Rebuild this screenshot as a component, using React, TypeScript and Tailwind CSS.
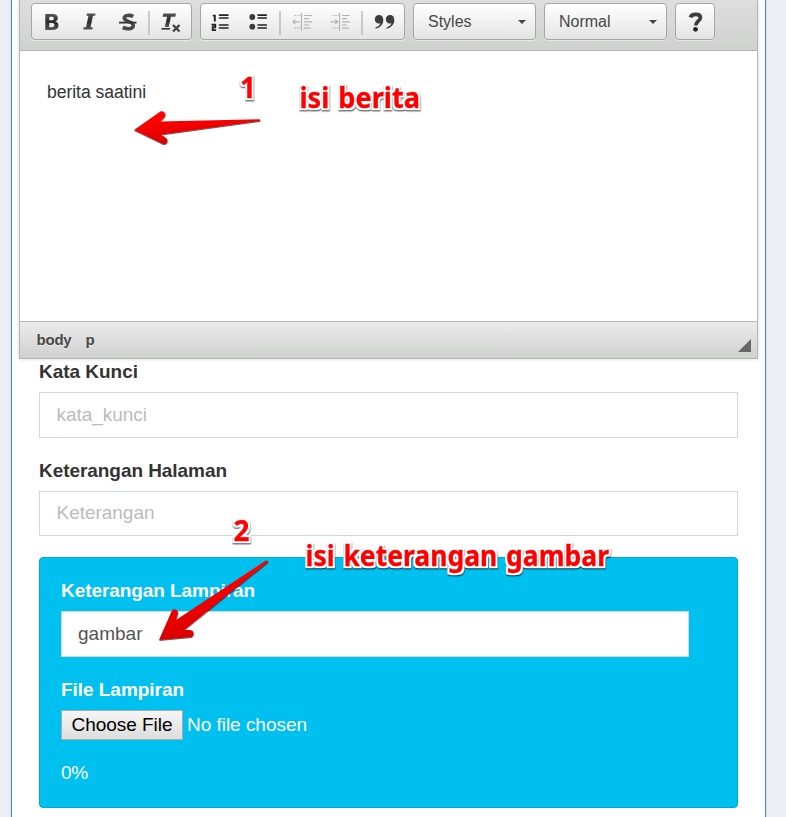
import React from "react";

const sans = "font-['Liberation_Sans',Arial,sans-serif]";
const group =
  "flex h-[37px] shrink-0 rounded-[4px] border border-[#a6a6a6] bg-gradient-to-b from-white to-[#e4e4e4] shadow-[0_1px_0_rgba(255,255,255,0.5)]";

function FormatIcons() {
  return (
    <svg className="block h-[35px] w-[159px]" viewBox="32 4 159 35">
      <defs>
        <linearGradient id="ink" x1="0" y1="0" x2="0" y2="1">
          <stop offset="0" stopColor="#555" />
          <stop offset=".5" stopColor="#2b2b2b" />
          <stop offset="1" stopColor="#555" />
        </linearGradient>
      </defs>
      <path
        fill="url(#ink)"
        fillRule="evenodd"
        d="M45.300 14h7c3.600 0 5.500 1.500 5.500 4 0 2-1 3.100-2.500 3.600 2 .4 3.200 1.900 3.200 4 0 3-2.200 4.400-6 4.400h-7.200zM49.300 16.800v3.500h2.200c1.600 0 2.300-.6 2.300-1.800s-.7-1.700-2.300-1.700zM49.300 23v4.200h2.500c1.800 0 2.600-.7 2.600-2.100s-.8-2.100-2.600-2.100z"
      />
      <path
        fill="url(#ink)"
        d="M87 13.500h8.500l-.4 2.300h-2.100l-2.500 11.500h2.200l-.5 2.300h-9l.5-2.300h2.300l2.500-11.500h-2z"
      />
      <path
        d="M133.300 16.400c-3.400-1.600-9-1.500-9 1.700 0 4.300 9 2.700 9 7.200 0 4-6 4.300-10.500 2.200"
        fill="none"
        stroke="#484848"
        strokeWidth="3.600"
      />
      <path d="M119 22.600h17.500" stroke="#333" strokeWidth="1.800" />
      <path d="M149 11v24" stroke="#bbb" strokeWidth="1.500" />
      <path
        fill="url(#ink)"
        d="M163.300 13.500h12.700l-.7 3.200h-4.300l-2.300 10.300h-3.900l2.300-10.300h-4.500z"
      />
      <path d="M161.500 28.800h8.500" stroke="#333" strokeWidth="1.600" />
      <path d="M173 25l6.500 6.500M179.500 25l-6.500 6.500" stroke="#444" strokeWidth="2.400" />
    </svg>
  );
}

function ParagraphIcons() {
  return (
    <svg className="block h-[35px] w-[203px]" viewBox="201 4 203 35">
      <g fill="none" stroke="#222">
        <path d="M212.800 15.600h2v5.900M211.600 24.700h3.600v2.500h-2.500v2.900h3.400" strokeWidth="1.900" />
        <path
          d="M219.500 15.100h8.500M219.500 18h8.500M219.500 25h8.500M219.500 28h8.500M258 15.100h8.300M258 18h8.300M258 25h8.300M258 28h8.300"
          strokeWidth="1.600"
          strokeLinecap="round"
        />
      </g>
      <circle cx="252.300" cy="17" r="2.900" fill="#3a3a3a" />
      <circle cx="252.300" cy="26.700" r="2.900" fill="#3a3a3a" />
      <path d="M280 11v24M362 11v24" stroke="#bbb" strokeWidth="1.500" />
      <g fill="none" stroke="#b4b4b4" strokeWidth="1.200">
        <path d="M301.500 13v18M304 15.500h8M304 18.700h5M304 21.800h8M304 25h5M304 28.200h7" />
        <path d="M294.500 15.500h6M294.500 27.800h6" strokeDasharray="1.500 1" />
        <path d="M293 21.800h7M295.300 19.500l-2.300 2.300 2.300 2.300" />
        <path d="M339.500 13v18M342 15.500h8M342 18.700h5M342 21.800h8M342 25h5M342 28.200h7" />
        <path d="M332.500 15.500h6M332.500 27.800h6" strokeDasharray="1.500 1" />
        <path d="M330.500 21.800h7M335.200 19.500l2.300 2.300-2.300 2.300" />
      </g>
      <g fill="#3d3d3d">
        <path d="M379 15c2.700 0 4.300 2 4.300 4.900 0 4.500-3.300 7.800-7.800 8.800v-1.200c2.700-.8 4.500-2.400 4.900-4.200-3.200.9-5.600-.9-5.600-4 0-2.500 1.700-4.300 4.200-4.300z" />
        <path d="M390 15c2.700 0 4.300 2 4.300 4.900 0 4.500-3.300 7.800-7.800 8.800v-1.200c2.700-.8 4.500-2.400 4.900-4.200-3.200.9-5.600-.9-5.600-4 0-2.500 1.700-4.300 4.200-4.300z" />
      </g>
    </svg>
  );
}

function Combo({ label }: { label: string }) {
  return (
    <div className={`${group} w-[123px] items-center justify-between pr-[9px] pl-[14px]`}>
      <span className="text-[16px] leading-[20px] text-[#474747]">{label}</span>
      <svg className="h-1 w-2" viewBox="0 0 8 4">
        <path d="M0 0h8L4 4z" fill="#444" />
      </svg>
    </div>
  );
}

function Editor() {
  return (
    <div className="ml-[7px] h-[359px] w-[739px] border-x border-b border-[#b6b6b6] bg-white shadow-[0_0_4px_rgba(0,0,0,0.15)]">
      <div className="flex h-[51px] gap-2 border-b border-[#b6b6b6] bg-gradient-to-b from-[#dedede] to-[#cfd1cf] pt-[3px] pl-[11px]">
        <div className={`${group} w-[161px]`}>
          <FormatIcons />
        </div>
        <div className={`${group} w-[205px]`}>
          <ParagraphIcons />
        </div>
        <Combo label="Styles" />
        <Combo label="Normal" />
        <div className={`${group} w-[40px]`}>
          <svg className="block h-[35px] w-[38px]" viewBox="676 4 38 35">
            <path
              d="M690.400 17.300c1.500-4 10-4 10 .3 0 3.600-4.600 3.300-4.600 7.900"
              fill="none"
              stroke="#3c3c3c"
              strokeWidth="3.700"
            />
            <circle cx="695.500" cy="29.300" r="2.400" fill="#222" />
          </svg>
        </div>
      </div>
      <div className="h-[270px] pt-[31px] pl-[27px] text-[17.600px] leading-[20px] text-[#333]">
        <Fit width={99} text="berita saatini" />
      </div>
      <div className="flex h-[37px] items-center border-t border-[#b6b6b6] bg-gradient-to-b from-[#ebebeb] to-[#cfd1cf] pr-[6px] pl-[16.500px] text-[15px] font-bold text-[#484848] [text-shadow:0_1px_0_rgba(255,255,255,0.5)]">
        <Fit width={35} text="body" />
        <span className="ml-[14px]">p</span>
        <svg className="mt-[11px] ml-auto h-[13px] w-[13px]" viewBox="0 0 13 13">
          <path d="M13 0v13H0z" fill="#666" />
        </svg>
      </div>
    </div>
  );
}

/** A single line of text justified to a set width. */
function Fit({ width, text }: { width: number; text: string }) {
  const ref = React.useRef<HTMLSpanElement>(null);
  const [spacing, setSpacing] = React.useState(0);
  React.useLayoutEffect(() => {
    if (ref.current) {
      const natural = ref.current.getBoundingClientRect().width;
      setSpacing((width - natural) / text.length);
    }
  }, [width, text]);
  return (
    <span ref={ref} className="inline-block whitespace-nowrap" style={{ letterSpacing: spacing }}>
      {text}
    </span>
  );
}

function Annotations() {
  const label =
    "fill-[#ff0000] stroke-[#ff0000] font-['Noto_Sans','Open_Sans',sans-serif] text-[28.500px] font-bold";
  return (
    <svg className="pointer-events-none absolute inset-0 h-[817px] w-[786px]" viewBox="0 0 786 817">
      <defs>
        <linearGradient id="red" x1="0" y1="0" x2="0.300" y2="1">
          <stop offset="0.300" stopColor="#ff0000" />
          <stop offset="1" stopColor="#d80000" />
        </linearGradient>
        <filter id="drop" x="-20%" y="-30%" width="140%" height="170%">
          <feDropShadow dx="0.300" dy="1" stdDeviation="0.600" floodColor="#000" floodOpacity="0.650" />
        </filter>
        <filter id="outline" x="-5%" y="-5%" width="110%" height="110%" colorInterpolationFilters="sRGB">
          <feMorphology in="SourceAlpha" operator="dilate" radius="2" result="wide" />
          <feGaussianBlur in="wide" stdDeviation="0.500" result="soft" />
          <feFlood floodColor="#fff" />
          <feComposite in2="soft" operator="in" result="halo" />
          <feDropShadow in="halo" dx="0.300" dy="1.200" stdDeviation="0.500" floodColor="#000" floodOpacity="0.650" result="shaded" />
          <feMerge>
            <feMergeNode in="shaded" />
            <feMergeNode in="SourceGraphic" />
          </feMerge>
        </filter>
      </defs>
      <g filter="url(#outline)" strokeWidth="0.300">
        <text className={label} x="240" y="98" textLength="16" lengthAdjust="spacingAndGlyphs">1</text>
        <text className={label} x="299.500" y="107.700" textLength="120.500" lengthAdjust="spacingAndGlyphs" wordSpacing="2">isi berita</text>
        <text className={label} x="233.500" y="541" textLength="16" lengthAdjust="spacingAndGlyphs">2</text>
        <text className={label} x="305.500" y="566" textLength="303.500" lengthAdjust="spacingAndGlyphs" wordSpacing="2">isi keterangan gambar</text>
      </g>
      <g filter="url(#drop)" fill="url(#red)">
        <path d="M134 130L160 111.700C163.500 110 167.500 114.500 164 117.500L160 121.500L259.500 119.200Q261 120 259.500 121L161 134.500L166 138C169.500 141 166 145.500 162 143.500Z" />
        <path d="M159 640L171.500 611.500C173 608 178 609 178 613L176 620L265.500 560.800Q269 560 267.500 562.500L184 630L190 630C194.500 630 194.500 636 191 637Z" />
      </g>
    </svg>
  );
}

export default function App() {
  return (
    <div className={`relative h-[817px] w-[786px] overflow-hidden bg-[#ebeef3] ${sans}`}>
      <main className="ml-[11px] h-full w-[755px] border-x border-[#3c8dbc] bg-white shadow-[0_0_2px_rgba(0,0,0,0.15)]">
        <Editor />
        <form className="ml-[27px] w-[699px] text-[19px] text-[#333]">
          <label className="block h-[33px] pt-[2px] leading-[22px] font-bold">
            <Fit width={99} text="Kata Kunci" />
          </label>
          <div className="flex h-[46px] items-center border border-[#d2d6de] bg-white pl-[16.500px] text-[#bbb]">
            <Fit width={90.5} text="kata_kunci" />
          </div>
          <label className="block h-[53px] pt-[22px] leading-[22px] font-bold">
            <Fit width={188} text="Keterangan Halaman" />
          </label>
          <div className="flex h-[45px] items-center border border-[#d2d6de] bg-white pl-[16.500px] text-[#bbb]">
            <Fit width={98} text="Keterangan" />
          </div>
          <section className="mt-[21px] h-[251px] rounded-[4px] border border-[#00a7d0] bg-[#00c0ef] pl-[21px] text-white">
            <label className="block h-[53px] pt-[22px] leading-[22px] font-bold">
              <Fit width={194} text="Keterangan Lampiran" />
            </label>
            <div className="flex h-[46px] w-[628px] items-center border border-[#d2d6de] bg-white pl-[16px] text-[#555]">
              <Fit width={64.5} text="gambar" />
            </div>
            <label className="block h-[53px] pt-[22px] leading-[22px] font-bold">
              <Fit width={123} text="File Lampiran" />
            </label>
            <div className="flex h-[30px] items-center">
              <span className="flex h-[30px] w-[122px] items-center justify-center border border-[#a9a9a9] bg-gradient-to-b from-[#f6f6f6] to-[#dddddd] text-black">
                <Fit width={101} text="Choose File" />
              </span>
              <span className="ml-[4px]">
                <Fit width={120} text="No file chosen" />
              </span>
            </div>
            <p className="pt-[22px] leading-[22px]">
              <Fit width={27} text="0%" />
            </p>
          </section>
        </form>
      </main>
      <Annotations />
    </div>
  );
}
